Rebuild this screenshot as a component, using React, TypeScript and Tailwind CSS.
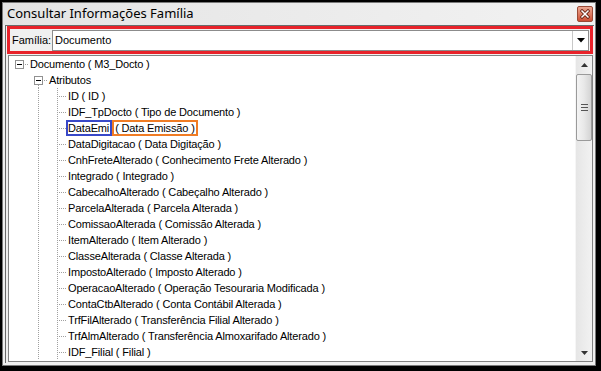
import React from 'react';

const leaves: [string, string][] = [
  ['ID', 'ID'],
  ['IDF_TpDocto', 'Tipo de Documento'],
  ['DataEmi', 'Data Emissão'],
  ['DataDigitacao', 'Data Digitação'],
  ['CnhFreteAlterado', 'Conhecimento Frete Alterado'],
  ['Integrado', 'Integrado'],
  ['CabecalhoAlterado', 'Cabeçalho Alterado'],
  ['ParcelaAlterada', 'Parcela Alterada'],
  ['ComissaoAlterada', 'Comissão Alterada'],
  ['ItemAlterado', 'Item Alterado'],
  ['ClasseAlterada', 'Classe Alterada'],
  ['ImpostoAlterado', 'Imposto Alterado'],
  ['OperacaoAlterado', 'Operação Tesouraria Modificada'],
  ['ContaCtbAlterado', 'Conta Contábil Alterada'],
  ['TrfFilAlterado', 'Transferência Filial Alterado'],
  ['TrfAlmAlterado', 'Transferência Almoxarifado Alterado'],
  ['IDF_Filial', 'Filial'],
];

type Guide = 'empty' | 'line' | 'leaf' | 'box';

// one 19px indent column of the tree, drawn with dotted lines
const GuideCell = ({ kind }: { kind: Guide }) => (
  <svg width="19" height="16" className="shrink-0 block" shapeRendering="crispEdges">
    {(kind === 'line' || kind === 'leaf') && (
      <line x1="10.5" y1="0" x2="10.5" y2="16" stroke="#a0a0a0" strokeDasharray="1 1" />
    )}
    {kind === 'leaf' && (
      <line x1="12" y1="8.5" x2="19" y2="8.5" stroke="#a0a0a0" strokeDasharray="1 1" />
    )}
    {kind === 'box' && (
      <>
        <rect x="6.5" y="4.5" width="8" height="8" fill="#fff" stroke="#919191" />
        <line x1="8" y1="8.5" x2="13" y2="8.5" stroke="#000" />
        <line x1="16" y1="8.5" x2="19" y2="8.5" stroke="#a0a0a0" strokeDasharray="1 1" />
      </>
    )}
  </svg>
);

const Row = ({ guides, children }: { guides: Guide[]; children: React.ReactNode }) => (
  <div className="flex h-4 items-center whitespace-nowrap">
    {guides.map((g, i) => (
      <GuideCell key={i} kind={g} />
    ))}
    {children}
  </div>
);

const Atributos = () => (
  <div className="flex h-4 items-center whitespace-nowrap">
    <GuideCell kind="empty" />
    <svg width="19" height="16" className="shrink-0 block" shapeRendering="crispEdges">
      <rect x="6.5" y="4.5" width="8" height="8" fill="#fff" stroke="#919191" />
      <line x1="8" y1="8.5" x2="13" y2="8.5" stroke="#000" />
      <line x1="16" y1="8.5" x2="19" y2="8.5" stroke="#a0a0a0" strokeDasharray="1 1" />
      <line x1="10.5" y1="13" x2="10.5" y2="16" stroke="#a0a0a0" strokeDasharray="1 1" />
    </svg>
    <span className="ml-[2px]">Atributos</span>
  </div>
);

const Scrollbar = () => (
  <div className="w-[17px] shrink-0 bg-gradient-to-r from-[#e6e6e6] to-[#f2f2f2] border-l border-[#f6f6f6] flex flex-col items-center">
    <div className="h-[17px] flex items-center justify-center">
      <svg width="7" height="4"><path d="M3.5 0 L7 4 L0 4 Z" fill="#333" /></svg>
    </div>
    <div className="mt-[1px] w-[16px] h-[67px] rounded-[2px] border border-[#9a9a9a] bg-gradient-to-r from-[#f4f4f4] via-[#e8e8e8] to-[#d4d4d4] flex flex-col items-center justify-center gap-[2px]">
      <div className="w-[7px] h-px bg-[#555]" />
      <div className="w-[7px] h-px bg-[#555]" />
      <div className="w-[7px] h-px bg-[#555]" />
    </div>
    <div className="flex-1" />
    <div className="h-[17px] flex items-center justify-center">
      <svg width="7" height="4"><path d="M0 0 L7 0 L3.5 4 Z" fill="#333" /></svg>
    </div>
  </div>
);

export default function App() {
  return (
    <div className="w-[601px] h-[371px] bg-black pt-[2px] pl-[2px] overflow-hidden">
      <div className="w-[594px] h-[364px] bg-[#f0f0f0] border border-[#7a7a7a] flex flex-col">
        <div className="h-[22px] shrink-0 flex items-center justify-between pl-[4px] pr-[2px] bg-gradient-to-r from-[#e4e4e4] to-[#f2f2f2]">
          <span className="text-[13px] text-black font-['Noto_Sans',sans-serif] leading-none -mt-[2px]">
            Consultar Informações Família
          </span>
          <div className="w-[16px] h-[16px] rounded-[2px] border border-[#9a4a36] bg-gradient-to-b from-[#eba690] to-[#cc4e33] flex items-center justify-center">
            <svg width="10" height="10" viewBox="0 0 10 10">
              <path d="M2 2 L8 8 M8 2 L2 8" stroke="#6a2414" strokeWidth="3.2" strokeLinecap="square" />
              <path d="M2 2 L8 8 M8 2 L2 8" stroke="#fff" strokeWidth="1.5" strokeLinecap="square" />
            </svg>
          </div>
        </div>

        <div className="flex-1 ml-[2px] mr-[1px] mb-[2px] border-l border-t border-[#6a6a6a] border-b-white border-r-white flex flex-col font-['Liberation_Sans',Arial,sans-serif] text-[11px] text-black">
          <div className="mt-0 ml-[1px] mr-[1px] h-[28px] border-[3px] border-[#e8222a] flex items-center">
            <span className="ml-[2px] w-[40px]">Família:</span>
            <div className="flex-1 mr-[1px] h-[21px] bg-white border border-[#8c8c8c] flex items-center">
              <span className="ml-[2px] flex-1">Documento</span>
              <div className="w-[16px] h-full border-l border-[#c8c8c8] flex items-center justify-center">
                <svg width="8" height="5"><path d="M0 0 L8 0 L4 4.5 Z" fill="#000" /></svg>
              </div>
            </div>
          </div>

          <div className="mt-[1px] ml-[2px] mr-[1px] h-[307px] border border-[#828282] bg-white flex overflow-hidden tracking-[-0.15px]">
            <div className="flex-1">
              <Row guides={['box']}>
                <span className="ml-[2px]">Documento ( M3_Docto )</span>
              </Row>
              <Atributos />
              {leaves.map(([name, desc]) =>
                name === 'DataEmi' ? (
                  <Row key={name} guides={['empty', 'line', 'leaf']}>
                    <span className="h-[16px] border-2 border-[#3848c8] leading-[12px] pr-px">DataEmi</span>
                    <span className="h-[16px] border-2 border-[#f07c24] leading-[12px] pl-px pr-px">
                      ( {desc} )
                    </span>
                  </Row>
                ) : (
                  <Row key={name} guides={['empty', 'line', 'leaf']}>
                    <span className="ml-[2px]">
                      {name} ( {desc} )
                    </span>
                  </Row>
                ),
              )}
            </div>
            <Scrollbar />
          </div>
        </div>
      </div>
    </div>
  );
}
